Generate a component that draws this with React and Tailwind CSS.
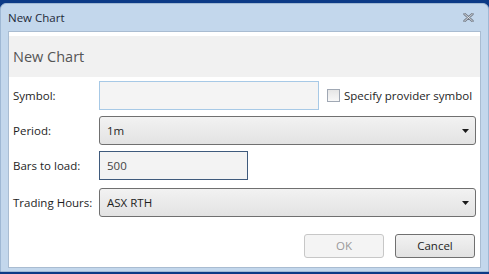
import React from 'react';

const font = { fontFamily: '"Open Sans", "Noto Sans", Arial, sans-serif' };

const Arrow = () => (
  <svg width="7" height="4" viewBox="0 0 7 4" className="shrink-0">
    <path d="M0 0h7L3.5 4z" fill="#1a1a1a" />
  </svg>
);

const Select = ({ value }) => (
  <div className="flex h-[29px] flex-1 items-center justify-between rounded-[3px] border border-[#707070] bg-gradient-to-b from-[#f2f2f2] to-[#e3e3e3] pl-[7px] pr-[6px] text-[11.5px] text-[#1e1e1e]">
    <span>{value}</span>
    <Arrow />
  </div>
);

const Row = ({ label, children }) => (
  <div className="flex items-center">
    <div className="w-[86px] shrink-0 whitespace-nowrap text-[11.5px] text-[#1e1e1e]">{label}</div>
    {children}
  </div>
);

export default function App() {
  return (
    <div className="flex h-[274px] w-[489px] flex-col bg-[#0c3a86] pt-[3px] pb-[2px]" style={font}>
      <div className="flex flex-1 flex-col rounded-t-[6px] border border-[#9fb8d4] bg-[#c3d7ec] px-[7px] pb-[3px]">
        {/* title bar */}
        <div className="flex h-[27px] items-center justify-between pr-[7px]">
          <span className="text-[11.5px] text-[#1e2a3a]">New Chart</span>
          <svg width="11" height="9" viewBox="0 0 11 9">
            <path d="M1.5 1 L9.5 8 M9.5 1 L1.5 8" stroke="#737b88" strokeWidth="2.4" strokeLinecap="round" />
            <path d="M1.5 1 L9.5 8 M9.5 1 L1.5 8" stroke="#eef1f5" strokeWidth="0.8" strokeLinecap="round" />
          </svg>
        </div>

        <div className="flex flex-1 flex-col border border-[#a9bcd1] bg-white">
          <div className="mt-[4px] flex h-[41px] items-center bg-[#f1f1f1] pl-[4px] text-[14.5px] text-[#555]">
            New Chart
          </div>

          <div className="flex flex-col gap-[6px] pl-[4px] pr-[4px] pt-[4px]">
            <Row label="Symbol:">
              <div className="h-[29px] w-[220px] border border-[#a7c9e6] bg-[#f4f4f4]" />
              <label className="ml-[8px] flex items-center gap-[4px] whitespace-nowrap text-[11.5px] text-[#1e1e1e]">
                <span className="h-[13px] w-[13px] shrink-0 border border-[#a0a8b4] bg-gradient-to-b from-[#e6e6e6] to-[#f8f8f8]" />
                Specify provider symbol
              </label>
            </Row>
            <Row label="Period:">
              <Select value="1m" />
            </Row>
            <Row label="Bars to load:">
              <div className="flex h-[29px] w-[149px] items-center border border-[#3f5a7c] bg-[#f3f3f3] pl-[7px] text-[11.5px] text-[#444]">
                500
              </div>
            </Row>
            <div className="mt-[2px]">
              <Row label="Trading Hours:">
                <Select value="ASX RTH" />
              </Row>
            </div>
          </div>

          <div className="mt-auto mb-[9px] flex justify-end gap-[11px] pr-[5px]">
            <button className="h-[24px] w-[80px] rounded-[3px] border border-[#c7c7c7] bg-[#f4f4f4] text-[11.5px] text-[#9a9a9a]">
              OK
            </button>
            <button className="h-[24px] w-[80px] rounded-[3px] border border-[#707070] bg-gradient-to-b from-[#f2f2f2] to-[#e2e2e2] text-[11.5px] text-[#1e1e1e]">
              Cancel
            </button>
          </div>
        </div>
      </div>
    </div>
  );
}
